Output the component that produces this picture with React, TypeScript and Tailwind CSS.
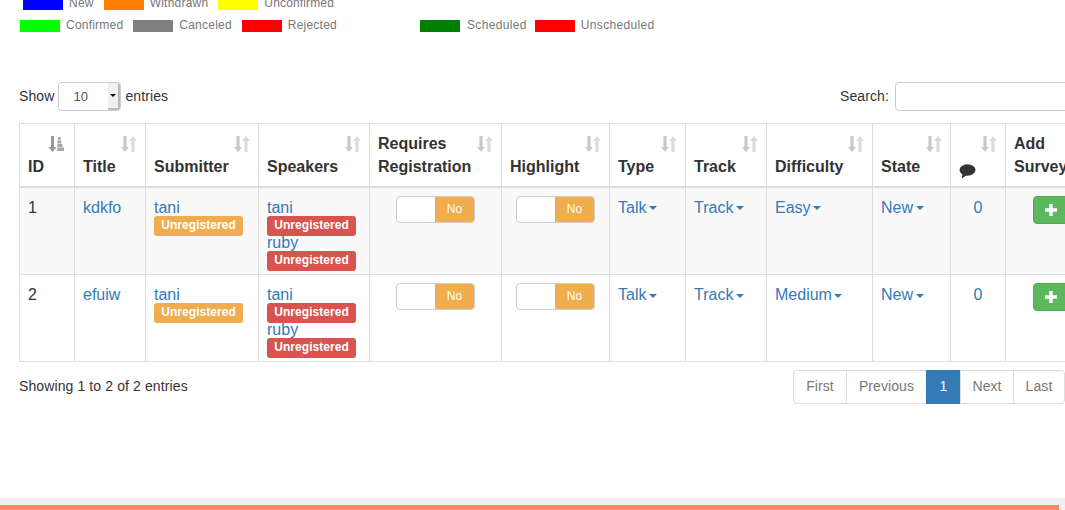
import React from "react";

const SortIcon = ({ active = false }: { active?: boolean }) => (
  <svg width="17" height="17" viewBox={active ? "1 0 17 17" : "0 0 17 17"} className="absolute right-[8px] top-[12px] overflow-visible">
    {active ? (
      <>
        <path d="M3 0h3v11h2.600L4.500 16 .4 11H3z" fill="#999" />
        <path d="M10 1h2.600v3H10zM9.400 4.500h4v3h-4zM9.400 8h5v3h-5zM9 11.500h7V15H9z" fill="#a9a9a9" />
      </>
    ) : (
      <>
        <path d="M3.400 0h3.200v11h2.400L5 16 1 11h2.400z" fill="#c8c8c8" />
        <path d="M13 0l4 5h-2.400v11h-3.200V5H9z" fill="#d8dddd" />
      </>
    )}
  </svg>
);

const CommentIcon = () => (
  <svg width="17" height="15" viewBox="0 0 17 15" className="block">
    <ellipse cx="8.5" cy="6" rx="8" ry="5.8" fill="#333" />
    <path d="M3.500 9.500 2.800 14.400 8 11z" fill="#333" />
  </svg>
);

const Label = ({ color, children }: { color: string; children: React.ReactNode }) => (
  <span className={`inline rounded-[3px] px-[7.2px] pt-[2.4px] pb-[3.6px] align-[1px] text-[12px] font-bold leading-none tracking-[0.06px] text-white ${color}`}>
    {children}
  </span>
);

const Person = ({ name, color }: { name: string; color: string }) => (
  <>
    <a className="text-[16px] text-[#337ab7]">{name}</a>
    <br />
    <Label color={color}>Unregistered</Label>
  </>
);

const Toggle = () => (
  <div className="mx-auto flex h-[27px] w-[79px] overflow-hidden rounded-[4px] border border-[#ccc] bg-white">
    <div className="w-[38px]" />
    <div className="flex flex-1 items-center justify-center bg-[#f0ad4e] text-[12px] text-white">No</div>
  </div>
);

const Drop = ({ text }: { text: string }) => (
  <a className="text-[16px] text-[#337ab7]">
    {text}
    <span className="ml-[2.5px] inline-block border-x-[4px] border-t-[4px] border-x-transparent border-t-[#337ab7] align-middle" />
  </a>
);

const heads: { label: React.ReactNode; w: number; active?: boolean; noSort?: boolean }[] = [
  { label: "ID", w: 55, active: true },
  { label: "Title", w: 71 },
  { label: "Submitter", w: 113 },
  { label: "Speakers", w: 111 },
  { label: <>Requires<br />Registration</>, w: 132 },
  { label: "Highlight", w: 108 },
  { label: "Type", w: 76 },
  { label: "Track", w: 81 },
  { label: "Difficulty", w: 106 },
  { label: "State", w: 78 },
  { label: <CommentIcon />, w: 55 },
  { label: <>Add<br />Survey</>, w: 90, noSort: true },
];

const rows = [
  { id: 1, title: "kdkfo", diff: "Easy" },
  { id: 2, title: "efuiw", diff: "Medium" },
];

const td = "border border-[#ddd] px-2 pt-[11px] pb-[5.4px] align-top text-[16px] leading-[17.4px]";
const tdBox = "border border-[#ddd] px-2 pt-2 pb-[5px] align-top text-center";

const Swatch = ({ color, text, track }: { color: string; text: string; track?: string }) => (
  <div className="flex items-center gap-[6px]">
    <div className={`h-[12px] w-[40px] ${color}`} />
    <span className={`-mt-[2px] text-[12px] leading-[12px] text-[#777] ${track ?? "tracking-[0.22px]"}`}>{text}</span>
  </div>
);

const pageBtn = "flex h-[34px] items-center justify-center border border-[#ddd] text-[14px] tracking-[0.08px] text-[#777]";

export default function App() {
  return (
    <div className="flex h-[510px] w-[1065px] flex-col overflow-hidden bg-white font-['Liberation_Sans',Arial,sans-serif] text-[14px] text-[#333]">
      <div className="-mt-[2px] ml-[23px] flex gap-[10px]">
        <Swatch color="bg-[#0000ff]" text="New" />
        <Swatch color="bg-[#ff8000]" text="Withdrawn" />
        <Swatch color="bg-[#ffff00]" text="Unconfirmed" track="tracking-[0.15px]" />
      </div>
      <div className="ml-[20px] mt-[10px] flex gap-[10px]">
        <Swatch color="bg-[#00ff00]" text="Confirmed" />
        <Swatch color="bg-[#808080]" text="Canceled" />
        <Swatch color="bg-[#ff0000]" text="Rejected" />
        <div className="ml-[73px] flex gap-[8px]">
          <Swatch color="bg-[#008000]" text="Scheduled" track="tracking-[0.35px] pl-px" />
          <Swatch color="bg-[#ff0000]" text="Unscheduled" track="tracking-[0.33px]" />
        </div>
      </div>

      <div className="mt-[50px] flex h-[29px] items-center justify-between pl-[19px] tracking-[0.1px]">
        <div className="flex items-center">
          <span>Show</span>
          <div className="ml-[4px] flex h-[29px] w-[63px] overflow-hidden rounded-[4px] border border-[#ccc] bg-white">
            <div className="flex-1 pl-[14px] text-[13px] leading-[27px] text-[#555]">10</div>
            <div className="flex w-[12px] items-center justify-center border-r-2 border-b-2 border-r-[#bbb] border-b-[#bbb] bg-[#f0f0f0]">
              <span className="border-x-[3px] border-t-[3px] border-x-transparent border-t-black" />
            </div>
          </div>
          <span className="ml-[4px]">entries</span>
        </div>
        <div className="flex items-center">
          <span>Search:</span>
          <div className="ml-[6px] h-[29px] w-[180px] -mr-[10px] rounded-[4px] border border-[#ccc] bg-white" />
        </div>
      </div>

      <div className="ml-[19px] mt-[12px]">
        <table className="w-[1076px] table-fixed border-collapse">
          <colgroup>
            {heads.map((h, i) => (
              <col key={i} style={{ width: h.w }} />
            ))}
          </colgroup>
          <thead>
            <tr>
              {heads.map((h, i) => (
                <th key={i} className="relative border border-b-2 border-[#ddd] px-2 pt-[9px] pb-[7px] text-left align-bottom text-[16px] font-bold leading-[22.857px] text-[#333]">
                  {h.label}
                  {!h.noSort && <SortIcon active={h.active} />}
                </th>
              ))}
            </tr>
          </thead>
          <tbody>
            {rows.map((r, i) => (
              <tr key={r.id} className={i === 0 ? "bg-[#f9f9f9]" : "bg-white"}>
                <td className={td}>{r.id}</td>
                <td className={td}><a className="text-[#337ab7]">{r.title}</a></td>
                <td className={td}><Person name="tani" color="bg-[#f0ad4e]" /></td>
                <td className={td}>
                  <Person name="tani" color="bg-[#d9534f]" />
                  <br />
                  <Person name="ruby" color="bg-[#d9534f]" />
                </td>
                <td className={tdBox}><Toggle /></td>
                <td className={tdBox}><Toggle /></td>
                <td className={td}><Drop text="Talk" /></td>
                <td className={td}><Drop text="Track" /></td>
                <td className={td}><Drop text={r.diff} /></td>
                <td className={td}><Drop text="New" /></td>
                <td className={`${td} text-center text-[#337ab7]`}>0</td>
                <td className={tdBox}>
                  <button className="mx-auto flex h-[28px] w-[36px] items-center justify-center rounded-[4px] border border-[#4cae4c] bg-[#5cb85c]">
                    <svg width="12" height="12" viewBox="0 0 12 12">
                      <path d="M4.300 0h3.400v4.300H12v3.400H7.700V12H4.300V7.700H0V4.300h4.300z" fill="#fff" />
                    </svg>
                  </button>
                </td>
              </tr>
            ))}
          </tbody>
        </table>
      </div>

      <div className="mt-[8px] flex items-start justify-between pl-[19px]">
        <div className="pt-[6px] leading-[20px] tracking-[0.11px]">Showing 1 to 2 of 2 entries</div>
        <div className="flex">
          <span className={`${pageBtn} w-[54px] rounded-l-[4px]`}>First</span>
          <span className={`${pageBtn} -ml-px w-[81px]`}>Previous</span>
          <span className="-ml-px flex h-[34px] w-[35px] items-center justify-center border border-[#337ab7] bg-[#337ab7] text-white">1</span>
          <span className={`${pageBtn} -ml-px w-[54px]`}>Next</span>
          <span className={`${pageBtn} -ml-px w-[52px] rounded-r-[4px]`}>Last</span>
        </div>
      </div>

      <div className="mt-auto h-[12px] bg-[#f1f0ee] pt-[7px]">
        <div className="h-[5px] w-[1059px] bg-[#f28e67]" />
      </div>
    </div>
  );
}
